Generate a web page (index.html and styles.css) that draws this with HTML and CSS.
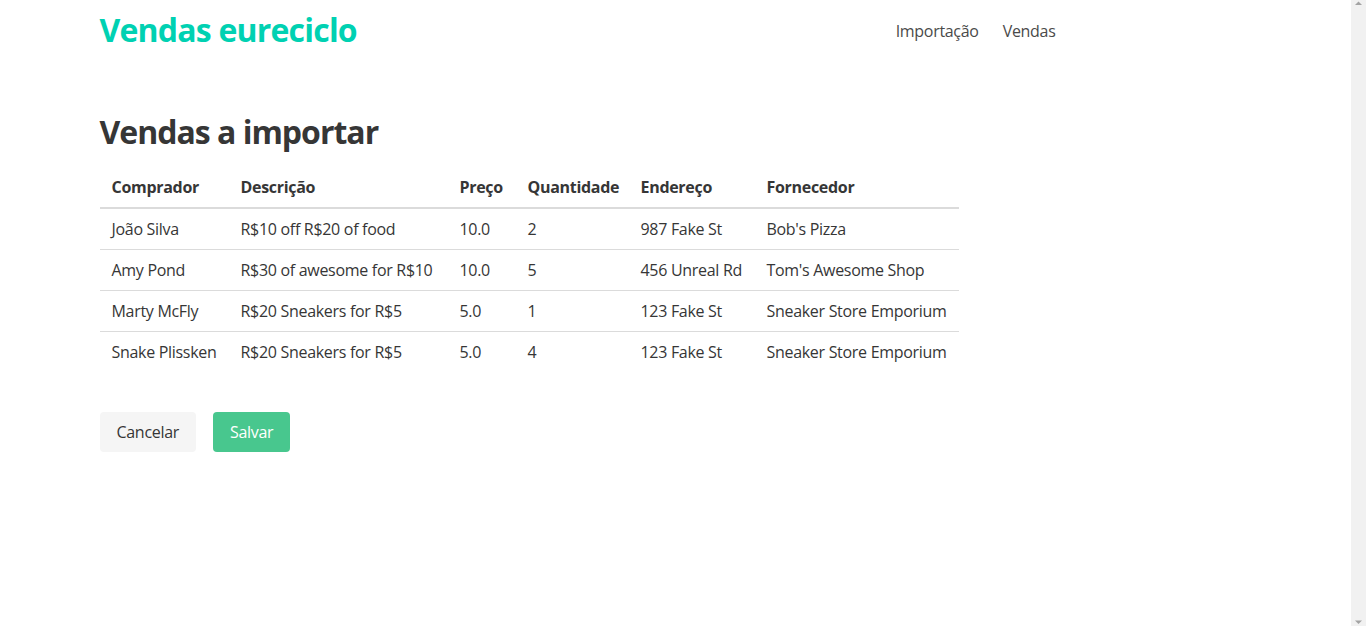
FILE: index.html
```html
<!DOCTYPE html>
<html lang="pt-BR">
<head>
<meta charset="utf-8">
<title>Vendas eureciclo</title>
<link rel="stylesheet" href="styles.css">
</head>
<body>
<header class="navbar">
  <div class="container navbar-inner">
    <a class="brand" href="#">Vendas eureciclo</a>
    <nav class="nav-links">
      <a class="nav-item" href="#">Importação</a>
      <a class="nav-item" href="#">Vendas</a>
    </nav>
  </div>
</header>
<main class="container main">
  <h1 class="title">Vendas a importar</h1>
  <table class="table">
    <colgroup>
      <col class="c1"><col class="c2"><col class="c3"><col class="c4"><col class="c5"><col class="c6">
    </colgroup>
    <thead>
      <tr><th>Comprador</th><th>Descrição</th><th>Preço</th><th>Quantidade</th><th>Endereço</th><th>Fornecedor</th></tr>
    </thead>
    <tbody>
      <tr><td>João Silva</td><td>R$10 off R$20 of food</td><td>10.0</td><td>2</td><td>987 Fake St</td><td>Bob's Pizza</td></tr>
      <tr><td>Amy Pond</td><td>R$30 of awesome for R$10</td><td>10.0</td><td>5</td><td>456 Unreal Rd</td><td>Tom's Awesome Shop</td></tr>
      <tr><td>Marty McFly</td><td>R$20 Sneakers for R$5</td><td>5.0</td><td>1</td><td>123 Fake St</td><td>Sneaker Store Emporium</td></tr>
      <tr><td>Snake Plissken</td><td>R$20 Sneakers for R$5</td><td>5.0</td><td>4</td><td>123 Fake St</td><td>Sneaker Store Emporium</td></tr>
    </tbody>
  </table>
  <div class="buttons">
    <button class="button button-light">Cancelar</button>
    <button class="button button-success">Salvar</button>
  </div>
</main>
<div class="scrollbar" aria-hidden="true">
  <svg class="arrow arrow-up" width="15" height="7" viewBox="0 0 15 7"><path d="M4 5 L11 5 L7.5 1.5 Z" fill="#a3a3a3"/></svg>
  <svg class="arrow arrow-down" width="15" height="7" viewBox="0 0 15 7"><path d="M4 1.5 L11 1.5 L7.5 5 Z" fill="#a3a3a3"/></svg>
</div>
</body>
</html>
```
FILE: styles.css
```css
html {
  background: #fff;
}
body {
  margin: 0 15px 0 0;
  font-family: "Open Sans", "Noto Sans", sans-serif;
  font-size: 16px;
  line-height: 1.5;
  letter-spacing: -0.3px;
  color: #4a4a4a;
}
.container {
  width: 1152px;
  margin: 0 auto;
}
.navbar-inner {
  display: flex;
  align-items: center;
  justify-content: space-between;
  height: 60px;
  box-sizing: border-box;
  padding-right: 196px;
}
.brand {
  font-size: 32px;
  font-weight: 700;
  letter-spacing: -0.8px;
  color: #00d1b2;
  text-decoration: none;
  line-height: 1;
}
.nav-links {
  display: flex;
  gap: 24px;
  padding-top: 2px;
}
.nav-item {
  color: #4a4a4a;
  text-decoration: none;
}
.main {
  padding-top: 54px;
}
.title {
  margin: 0 0 17px;
  font-size: 32px;
  font-weight: 700;
  letter-spacing: -1px;
  line-height: 1.125;
  color: #363636;
}
.table {
  border-collapse: collapse;
  border-spacing: 0;
  table-layout: fixed;
  width: 859px;
  color: #363636;
}
.c1 { width: 129px; }
.c2 { width: 219px; }
.c3 { width: 68px; }
.c4 { width: 113px; }
.c5 { width: 126px; }
.c6 { width: 204px; }
.table th,
.table td {
  padding: 8px 12px;
  text-align: left;
  white-space: nowrap;
  vertical-align: top;
  border-bottom: 1px solid #dbdbdb;
}
.table th {
  font-weight: 700;
  color: #363636;
  border-bottom-width: 2px;
}
.table tbody tr:last-child td {
  border-bottom: 0;
}
.buttons {
  display: flex;
  gap: 17px;
  margin-top: 40px;
}
.button {
  height: 40px;
  padding: 0 16px;
  border: 1px solid transparent;
  border-radius: 4px;
  font-family: inherit;
  font-size: 16px;
  letter-spacing: -0.3px;
  cursor: pointer;
}
.button-light {
  background: #f5f5f5;
  color: #363636;
}
.button-success {
  background: #48c78e;
  color: #fff;
}
.scrollbar {
  position: fixed;
  top: 0;
  right: 0;
  bottom: 0;
  width: 15px;
  background: #f1f1f1;
  display: flex;
  flex-direction: column;
  justify-content: space-between;
}
.arrow {
  display: block;
}
```
